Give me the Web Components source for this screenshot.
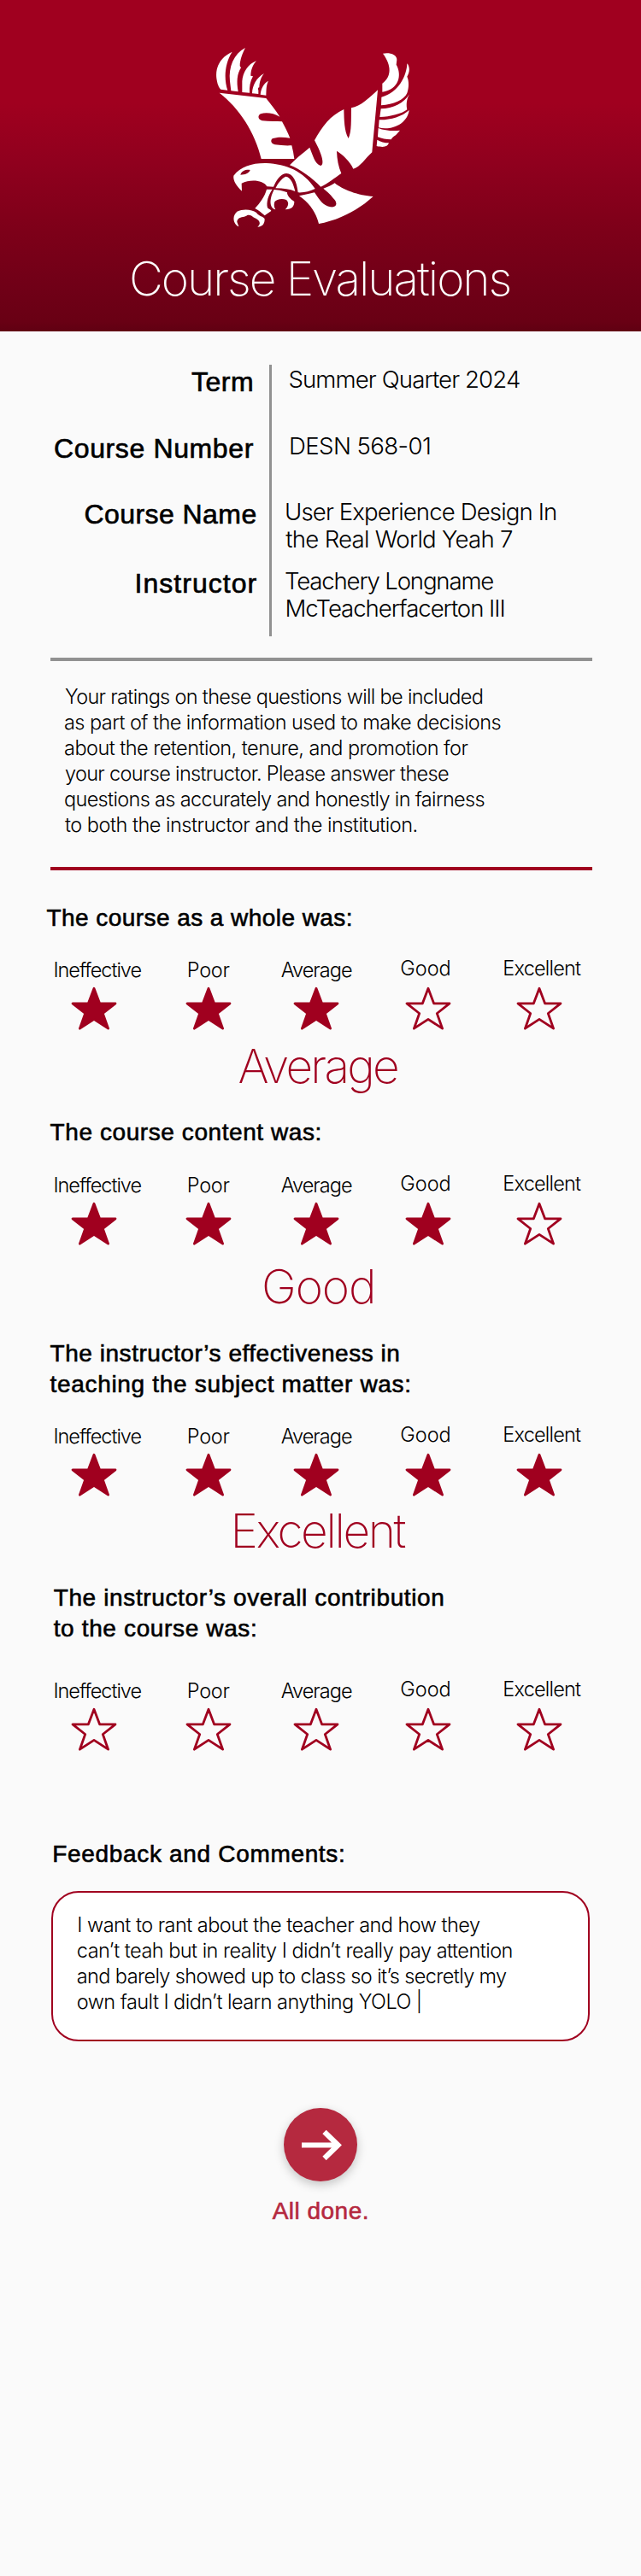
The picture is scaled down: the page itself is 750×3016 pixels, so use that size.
<!DOCTYPE html>
<html lang="en">
<head>
<meta charset="utf-8">
<title>Course Evaluations</title>
<style>
body{margin:0;background:#fafafa;color:#000;font-family:Inter,"Liberation Sans",sans-serif}
</style>
</head>
<body>
<eval-page></eval-page>
<script>
const define=(name,html,setup)=>customElements.define(name,class extends HTMLElement{
  connectedCallback(){
    if(this.shadowRoot)return;
    const t=document.createElement('template');
    t.innerHTML=typeof html==='function'?html(this):html;
    this.attachShadow({mode:'open'}).append(t.content.cloneNode(true));
    if(setup)setup(this);
  }
});

/* One line of text whose ink starts at x and is tracked to span w pixels. */
const ctx=document.createElement('canvas').getContext('2d');
define('text-line',`<style>
:host{display:block;white-space:pre;font-size:23.5px;line-height:30px;font-weight:300}
:host([kind=medium]){font-family:"Liberation Sans",Arial,sans-serif;font-size:28px;line-height:36px;font-weight:400;-webkit-text-stroke:.6px currentColor}
:host([kind=term]){font-family:"Liberation Sans",Arial,sans-serif;font-size:32px;line-height:38px;font-weight:400;-webkit-text-stroke:.65px currentColor}
:host([kind=value]){font-size:27.6px;line-height:32px}
:host([kind=display]){font-size:55px;line-height:66px;font-weight:200}
</style><slot></slot>`,el=>{
  const s=getComputedStyle(el),text=el.textContent;
  ctx.font=`${s.fontWeight} ${s.fontSize} ${s.fontFamily}`;
  const m=ctx.measureText(text);
  const ink=m.actualBoundingBoxRight+m.actualBoundingBoxLeft;
  el.style.letterSpacing=((+el.getAttribute('w')-ink)/(text.length-1)).toFixed(3)+'px';
  el.style.marginLeft=(+el.getAttribute('x')+m.actualBoundingBoxLeft).toFixed(2)+'px';
});

define('eagle-logo',`<style>:host{display:block;width:250px;height:230px}svg{display:block}</style>
<svg width="250" height="230" viewBox="0 0 750 690" fill="#fff">
<path d="M95 47C55 65 35 100 40 140C43 160 48 174 55 179L79 182C66 145 67 90 95 47Z"/>
<path d="M141 33C100 55 82 100 87 150L91 184L116 187C110 150 112 125 126 103L122 97C122 75 132 50 141 33Z"/>
<path d="M180 79C150 90 132 120 130 150V189L156 191C155 170 158 150 168 133L160 131C160 110 168 92 180 79Z"/>
<path d="M207 123C180 138 166 165 165 193L187 195V182C184 178 186 172 190 172C191 150 197 135 207 123Z"/>
<path d="M222 149C205 158 197 175 194 197L214 200C215 180 214 165 222 149Z"/>
<path d="M50 191L214 210C232 233 247 252 262 275C240 262 213 259 195 265C183 271 186 285 200 289C225 292 250 291 270 292C281 312 290 330 298 350C275 346 250 346 236 352C227 361 234 370 245 373C265 376 285 377 304 376C308 392 311 407 313 423H197C175 330 120 245 50 191Z"/>
<path d="M606 181C600 250 592 330 586 400C563 420 545 452 520 458C508 430 482 408 462 395C463 425 468 450 478 474C455 490 430 510 406 521C375 490 335 460 297 445C315 425 340 405 367 383C378 410 385 440 405 447C420 445 412 410 384 358C410 310 440 270 487 249C488 285 488 325 503 351C515 330 512 280 513 244C545 240 580 205 606 181Z"/>
<path d="M624 53C645 48 674 55 673 75L671 92C692 128 680 180 622 188V158C655 135 655 95 624 53Z"/>
<path d="M709 88C708 130 680 190 619 206L618 235C660 232 700 215 709 192C716 172 716 150 709 134C718 120 720 100 709 88Z"/>
<path d="M717 196C700 225 660 247 617 247L613 276C650 275 690 265 709 250C706 235 706 215 717 196Z"/>
<path d="M716 252C690 275 650 287 611 286L609 313C655 325 710 300 716 252Z"/>
<path d="M608 315C630 324 660 326 684 323L669 340C660 345 656 350 653 355C635 355 620 352 606 346Z"/>
<path d="M604 356C615 363 630 367 645 367C641 380 628 384 602 378Z"/>
<path fill-rule="evenodd" d="M129 536C112 520 97 500 100 482C125 450 165 437 215 438C285 442 345 465 386 528C368 537 348 542 326 541C322 505 310 474 285 474C262 476 250 500 240 521L217 520C205 498 160 493 128 509ZM124 479C128 466 142 460 158 462C154 474 140 479 124 479Z"/>
<path d="M283 485C268 492 255 510 247 526C275 526 298 530 316 537C310 510 300 487 283 485Z"/>
<path d="M216 530H236C222 550 214 575 219 595C225 601 232 602 232 606L209 622C198 612 188 603 175 597C190 580 210 555 216 530Z"/>
<path d="M242 531C260 532 278 537 288 541C287 552 300 565 313 573C313 590 305 600 281 601C292 590 296 577 285 567C270 560 250 565 244 574C240 585 243 595 247 601C228 597 222 570 242 531Z"/>
<path d="M118 661C99 652 93 625 112 608C135 597 165 601 180 612C190 627 210 625 209 637C208 653 200 662 184 662C197 650 192 640 178 632C168 630 162 617 148 621C138 630 114 624 112 644Z"/>
<path d="M330 553C350 548 368 546 384 541C402 568 415 588 440 592C465 595 465 575 450 562C438 545 425 535 415 527C430 522 445 515 455 508C480 530 540 553 590 555C530 610 460 640 399 651C390 615 370 580 330 553Z"/>
</svg>`);

define('page-header',`<style>
:host{display:block;box-sizing:border-box;height:388px;padding-top:45px;background:linear-gradient(#a0001f 0,#a0001f 31%,#90001e 49%,#7e0019 69%,#700017 87%,#690014 97%,#600012 100%);color:#fff}
eagle-logo{margin:0 0 18px 240px}
</style><eagle-logo></eagle-logo><text-line kind="display" x="154" w="442.5">Course Evaluations</text-line>`);

define('course-info',`<style>
:host{display:grid;grid-template-columns:315px 3px 1fr;height:318px;padding-top:39px}
i{background:#919191}
</style>
<div><text-line kind="term" x="224" w="71" style="margin-top:1px;margin-bottom:40px">Term</text-line><text-line kind="term" x="64" w="232.7" style="margin-bottom:39px">Course Number</text-line><text-line kind="term" x="99.4" w="200" style="margin-bottom:43px">Course Name</text-line><text-line kind="term" x="159.5" w="141">Instructor</text-line></div>
<i></i>
<div><text-line kind="value" x="20.4" w="269.5" style="margin:1px 0 46px">Summer Quarter 2024</text-line><text-line kind="value" x="22" w="163" style="margin-bottom:45px">DESN 568-01</text-line><text-line kind="value" x="17" w="315">User Experience Design In</text-line><text-line kind="value" x="16.3" w="264.8" style="margin-bottom:17px">the Real World Yeah 7</text-line><text-line kind="value" x="16" w="243.3">Teachery Longname</text-line><text-line kind="value" x="17.5" w="254">McTeacherfacerton III</text-line></div>`);

define('info-note',`<style>
:host{display:block;box-sizing:border-box;height:249px;margin:25px 57px 0 59px;padding-top:26.5px;border-top:4px solid #919191;border-bottom:4px solid #a0001f}
</style><text-line x="17" w="488.7">Your ratings on these questions will be included</text-line><text-line x="17" w="509.5">as part of the information used to make decisions</text-line><text-line x="17" w="471.4">about the retention, tenure, and promotion for</text-line><text-line x="17" w="449">your course instructor. Please answer these</text-line><text-line x="17" w="490.5">questions as accurately and honestly in fairness</text-line><text-line x="17" w="411.5">to both the instructor and the institution.</text-line>`);

define('rating-star',`<style>:host{display:block;width:54px;height:52px}svg{display:block;fill:none;stroke:#a0001f;stroke-width:2.8;stroke-linejoin:round}:host([on]) svg{fill:#a0001f}</style>
<svg width="54" height="52" viewBox="0 0 54 52"><path d="M27 2.2L33.6 19.8H52L37.3 31.5L43.6 49.2L27 38.3L10.4 49.2L16.7 31.5L2 19.8H20.4Z"/></svg>`);

const scale=[['Ineffective',20.4,101,39.3,0],['Poor',44.8,47.7,41.3,0],['Average',21.8,83.2,36.4,0],['Good',34.3,57.3,38.5,-2],['Excellent',24.3,89.7,37.6,-2]];
define('rating-scale',el=>`<style>
:host{display:grid;grid-template-columns:132px 131px 128px 131px 130px;margin-left:44px;height:86px}
.cell{display:flow-root}
.l{display:flow-root;height:34px}
text-line{position:relative}
</style>`+scale.map(([t,x,w,s,dy],i)=>`<div class="cell"><div class="l"><text-line x="${x}" w="${w}" style="margin-top:${dy}px">${t}</text-line></div><rating-star ${i<+el.getAttribute('value')?'on':''} style="margin-left:${s}px"></rating-star></div>`).join(''));

define('rating-question',el=>`<style>
:host{display:block;box-sizing:border-box}
rating-scale{margin-top:var(--gap)}
.result{color:#a0001f;padding-top:var(--drop)}
</style><slot></slot><rating-scale value="${el.getAttribute('value')}"></rating-scale><div class="result"><slot name="result"></slot></div>`);

define('comment-box',`<style>
:host{display:block;box-sizing:border-box;width:630px;height:176px;margin-left:60.3px;padding-top:22.5px;border:2px solid #a0001f;border-radius:32px;background:#fff}
</style><slot></slot>`);

define('submit-button',`<style>
:host{display:flex;flex-direction:column;color:#b5293f}
button{width:86px;height:86px;margin:0 0 16.5px 332px;padding:0;border:0;border-radius:50%;background:#b5293f;box-shadow:0 4px 12px rgba(0,0,0,.22)}
svg{display:block}
</style><button aria-label="Submit"><svg width="86" height="86" viewBox="0 0 86 86" fill="none" stroke="#fff" stroke-width="6.2"><path d="M21 43.5H63M47.5 28L63.5 43.5L47.5 59"/></svg></button><text-line kind="medium" x="318.7" w="111">All done.</text-line>`);

define('eval-page',`<style>
:host{display:block;height:3016px;overflow:hidden}
section,rating-question{display:block}
</style>
<page-header></page-header>
<course-info></course-info>
<info-note></info-note>
<rating-question value="3" style="height:251.5px;padding-top:37.5px;--gap:28px;--drop:8.5px"><text-line kind="medium" x="54.5" w="356.3">The course as a whole was:</text-line><text-line slot="result" kind="display" x="279.4" w="185.6">Average</text-line></rating-question>
<rating-question value="4" style="height:258.5px;padding-top:37.5px;--gap:28.5px;--drop:14.2px"><text-line kind="medium" x="58.6" w="316">The course content was:</text-line><text-line slot="result" kind="display" x="309" w="127">Good</text-line></rating-question>
<rating-question value="5" style="height:286px;padding-top:37.5px;--gap:28px;--drop:6px"><text-line kind="medium" x="58.6" w="407.7">The instructor’s effectiveness in</text-line><text-line kind="medium" x="58.6" w="420.7">teaching the subject matter was:</text-line><text-line slot="result" kind="display" x="274.6" w="200">Excellent</text-line></rating-question>
<rating-question value="0" style="height:300px;padding-top:37.5px;--gap:40px;--drop:0"><text-line kind="medium" x="62.7" w="455.6">The instructor’s overall contribution</text-line><text-line kind="medium" x="62.7" w="236.3">to the course was:</text-line></rating-question>
<section><text-line kind="medium" x="63.3" w="338.7" style="margin-top:37.5px;margin-bottom:25.5px">Feedback and Comments:</text-line>
<comment-box><text-line x="30" w="469.7">I want to rant about the teacher and how they</text-line><text-line x="28.5" w="507.8">can’t teah but in reality I didn’t really pay attention</text-line><text-line x="28.5" w="502.3">and barely showed up to class so it’s secretly my</text-line><text-line x="28.5" w="401">own fault I didn’t learn anything YOLO |</text-line></comment-box></section>
<submit-button style="margin-top:78px"></submit-button>`);
</script>
</body>
</html>
